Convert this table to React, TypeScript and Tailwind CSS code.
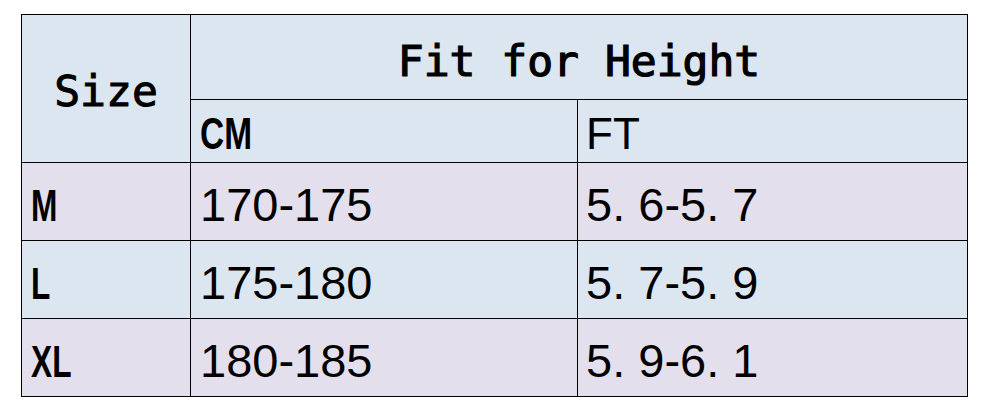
import React from "react";

const blue = "bg-[#dce6f1]";
const lav = "bg-[#e4dfec]";

const narrow = {
  fontFamily: '"Liberation Sans Narrow", "Liberation Sans", Arial, sans-serif',
};

export default function App() {
  const rows = [
    { s: "M", cm: "170-175", ft: "5. 6-5. 7", bg: lav },
    { s: "L", cm: "175-180", ft: "5. 7-5. 9", bg: blue },
    { s: "XL", cm: "180-185", ft: "5. 9-6. 1", bg: lav },
  ];
  return (
    <div className="w-[984px] h-[409px] bg-white pl-[21px] pt-[14px]">
      <table className="table-fixed border-collapse text-black">
        <colgroup>
          <col className="w-[169px]" />
          <col className="w-[387px]" />
          <col className="w-[390px]" />
        </colgroup>
        <tbody>
          <tr className={`h-[85px] ${blue}`}>
            <td
              rowSpan={2}
              className="border border-black text-center align-middle pt-[6px] text-[43px] font-['DejaVu_Sans_Mono',monospace] [-webkit-text-stroke:1px_black]"
            >
              Size
            </td>
            <td
              colSpan={2}
              className="border border-black text-center align-middle pt-[8px] text-[43px] font-['DejaVu_Sans_Mono',monospace] [-webkit-text-stroke:1.2px_black]"
            >
              Fit for Height
            </td>
          </tr>
          <tr className={`h-[63px] ${blue}`}>
            <td className="border border-black pl-[9px] pt-[6px] align-middle text-[44px] font-bold leading-none" style={narrow}>
              <span className="inline-block origin-left scale-x-[0.76]">CM</span>
            </td>
            <td className="border border-black pl-[8px] pt-[6px] align-middle text-[44px] leading-none font-['Liberation_Sans',Arial,sans-serif]">
              FT
            </td>
          </tr>
          {rows.map((r) => (
            <tr key={r.s} className={`h-[78px] ${r.bg}`}>
              <td className="border border-black pl-[9px] pt-[8px] align-middle text-[44px] font-bold leading-none" style={narrow}>
                <span className="inline-block origin-left scale-x-[0.72]">{r.s}</span>
              </td>
              <td className="border border-black pl-[9px] pt-[6px] align-middle text-[47px] leading-none font-['Liberation_Sans',Arial,sans-serif]">
                {r.cm}
              </td>
              <td className="border border-black pl-[8px] pt-[6px] align-middle text-[47px] leading-none font-['Liberation_Sans',Arial,sans-serif]">
                {r.ft}
              </td>
            </tr>
          ))}
        </tbody>
      </table>
    </div>
  );
}
